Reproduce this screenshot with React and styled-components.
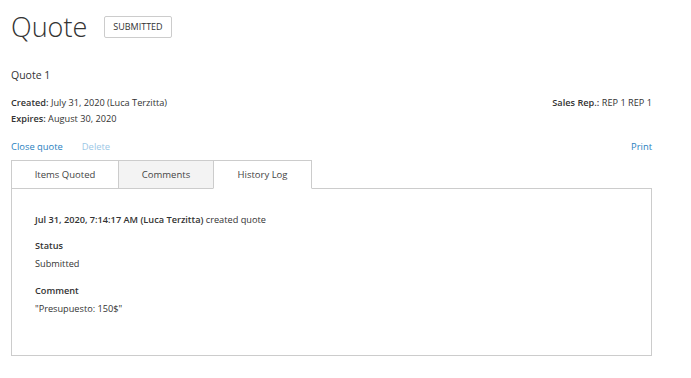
import React from 'react'
import { useState } from 'react'
import styled, { createGlobalStyle } from 'styled-components'

const GlobalStyle = createGlobalStyle`
  body {
    margin: 0;
    background: #fff;
    font-family: 'Open Sans', 'Noto Sans', sans-serif;
    color: #333;
  }
`

const Page = styled.div`
  width: 641px;
  padding: 8px 0 0 11px;
`

const Header = styled.div`
  display: flex;
  align-items: center;
  gap: 17px;
`

const Title = styled.h1`
  margin: 0;
  font-size: 27px;
  font-weight: 300;
  line-height: 38px;
  color: #333;
`

const Badge = styled.span`
  display: inline-block;
  border: 1px solid #ccc;
  border-radius: 2px;
  padding: 4px 8px;
  font-size: 9px;
  line-height: 12px;
  color: #333;
`

const Name = styled.div`
  margin-top: 21px;
  font-size: 10.5px;
  line-height: 16px;
`

const Meta = styled.div`
  display: flex;
  justify-content: space-between;
  margin-top: 12px;
  font-size: 9.2px;
  line-height: 16px;
`

const Label = styled.b`
  font-weight: 600;
`

const Actions = styled.div`
  display: flex;
  align-items: center;
  margin-top: 12px;
  font-size: 9.4px;
  line-height: 16px;
`

const Link = styled.a`
  color: ${p => (p.disabled ? '#9cc7e6' : '#2a7fc0')};
  margin-right: ${p => (p.gap ? '19px' : '0')};
  margin-left: ${p => (p.right ? 'auto' : '0')};
  cursor: pointer;
  text-decoration: none;
`

const Tabs = styled.div`
  display: flex;
  margin-top: 5px;
`

const Tab = styled.div`
  box-sizing: border-box;
  width: ${p => p.w}px;
  height: 29px;
  display: flex;
  align-items: center;
  justify-content: center;
  font-size: 9.5px;
  color: #444;
  background: ${p => (p.active ? '#fff' : p.shade ? '#f3f3f3' : '#fff')};
  border: 1px solid #ccc;
  border-bottom: ${p => (p.active ? '1px solid #fff' : '1px solid #ccc')};
  margin-left: ${p => (p.first ? '0' : '-1px')};
  margin-bottom: -1px;
  position: relative;
  z-index: ${p => (p.active ? 1 : 0)};
  cursor: pointer;
`

const Panel = styled.div`
  box-sizing: border-box;
  height: 168px;
  border: 1px solid #ccc;
  padding: 24px 23px;
  font-size: 9.2px;
  line-height: 14px;
`

const Entry = styled.div`
  margin-bottom: 12px;
`

const FieldLabel = styled.div`
  font-weight: 600;
  margin-top: ${p => (p.spaced ? '13px' : '12px')};
`

const FieldValue = styled.div`
  margin-top: 4px;
`

export default function App() {
  const tabs = [
    { label: 'Items Quoted', w: 108 },
    { label: 'Comments', w: 96, shade: true },
    { label: 'History Log', w: 99 }
  ]
  const [active, setActive] = useState(2)

  return (
    <Page>
      <GlobalStyle />
      <Header>
        <Title>Quote</Title>
        <Badge>SUBMITTED</Badge>
      </Header>
      <Name>Quote 1</Name>
      <Meta>
        <div>
          <div>
            <Label>Created:</Label> July 31, 2020 (Luca Terzitta)
          </div>
          <div>
            <Label>Expires:</Label> August 30, 2020
          </div>
        </div>
        <div>
          <Label>Sales Rep.:</Label> REP 1 REP 1
        </div>
      </Meta>
      <Actions>
        <Link gap>Close quote</Link>
        <Link disabled>Delete</Link>
        <Link right>Print</Link>
      </Actions>
      <Tabs>
        {tabs.map((t, i) => (
          <Tab
            key={t.label}
            w={t.w}
            first={i === 0}
            shade={t.shade}
            active={active === i}
            onClick={() => setActive(i)}
          >
            {t.label}
          </Tab>
        ))}
      </Tabs>
      <Panel>
        <Entry>
          <Label>Jul 31, 2020, 7:14:17 AM (Luca Terzitta)</Label> created quote
        </Entry>
        <FieldLabel>Status</FieldLabel>
        <FieldValue>Submitted</FieldValue>
        <FieldLabel spaced>Comment</FieldLabel>
        <FieldValue>"Presupuesto: 150$"</FieldValue>
      </Panel>
    </Page>
  )
}
